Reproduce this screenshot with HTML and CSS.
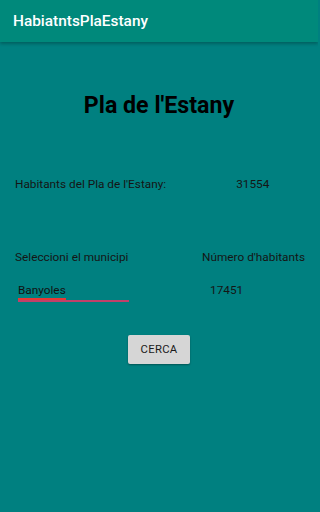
FILE: index.html
```html
<!DOCTYPE html>
<html>
<head>
<meta charset="utf-8">
<link rel="stylesheet" href="styles.css">
</head>
<body>
<div class="appbar">HabiatntsPlaEstany</div>
<main class="content">
  <h1 class="title">Pla de l'Estany</h1>
  <div class="row total">
    <span class="label">Habitants del Pla de l'Estany:</span>
    <span class="value v1">31554</span>
  </div>
  <div class="row heads">
    <span class="label">Seleccioni el municipi</span>
    <span class="label num">Número d'habitants</span>
  </div>
  <div class="row pick">
    <div class="spinner"><span class="sel">Banyoles</span></div>
    <span class="value v2">17451</span>
  </div>
  <div class="btnwrap"><button class="btn">CERCA</button></div>
</main>
</body>
</html>
```
FILE: styles.css
```css
html, body {
  margin: 0;
  padding: 0;
}
body {
  width: 318px;
  height: 512px;
  background: #008080;
  font-family: Roboto, "Noto Sans", sans-serif;
  color: #111;
  overflow: hidden;
}
.appbar {
  height: 42px;
  background: #00897b;
  color: #fff;
  font-size: 15.4px;
  font-weight: 500;
  line-height: 42px;
  padding-left: 13px;
  box-shadow: 0 2px 3px rgba(0,0,0,0.25);
  position: relative;
}
.content {
  display: flex;
  flex-direction: column;
}
.title {
  margin: 50px 0 0;
  text-align: center;
  font-size: 23.2px;
  font-weight: 700;
  color: #000;
  height: 26px;
  line-height: 26px;
}
.row {
  display: flex;
  align-items: center;
  font-size: 11.8px;
  height: 16px;
}
.label { color: #151515; }
.value { color: #151515; }
.total {
  margin-top: 58px;
  padding-left: 15px;
}
.v1 { margin-left: 70px; }
.heads {
  margin-top: 57px;
  padding-left: 15px;
}
.num { margin-left: auto; margin-right: 13px; }
.pick {
  margin-top: 18px;
  padding-left: 18px;
  height: 20px;
  align-items: flex-start;
}
.spinner {
  width: 111px;
  height: 17px;
  border-bottom: 2px solid #c2406a;
}
.sel {
  display: inline-block;
  border-bottom: 2px solid #e53935;
  line-height: 15px;
}
.v2 { margin-left: 81px; line-height: 14px; }
.btnwrap {
  display: flex;
  justify-content: center;
  margin-top: 32px;
}
.btn {
  width: 62px;
  height: 29px;
  background: #d6d6d6;
  border: none;
  border-radius: 2px;
  box-shadow: 0 1px 2px rgba(0,0,0,0.35);
  font-family: Roboto, sans-serif;
  font-size: 11.3px;
  font-weight: 400;
  color: #1a1a1a;
  padding: 0;
  letter-spacing: 0.3px;
}
```
